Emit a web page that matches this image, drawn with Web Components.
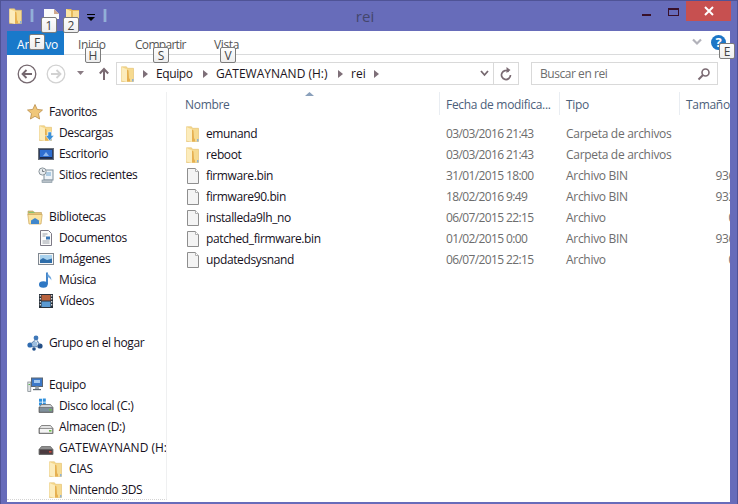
<!DOCTYPE html>
<html lang="es">
<head>
<meta charset="utf-8">
<title>rei</title>
<style>
  html, body { margin: 0; padding: 0; background: #676cba; }
  body { font: 12px "Open Sans", "Noto Sans", sans-serif; }
</style>
</head>
<body>
<win-window>
  <win-titlebar slot="top" caption="rei"></win-titlebar>
  <win-ribbon slot="top"></win-ribbon>
  <win-navbar slot="top"></win-navbar>

  <win-tree slot="left">
    <win-tree-item level="0" icon="star">Favoritos</win-tree-item>
    <win-tree-item level="1" icon="downloads">Descargas</win-tree-item>
    <win-tree-item level="1" icon="desktop">Escritorio</win-tree-item>
    <win-tree-item level="1" icon="recent">Sitios recientes</win-tree-item>
    <win-tree-item></win-tree-item>
    <win-tree-item level="0" icon="libraries">Bibliotecas</win-tree-item>
    <win-tree-item level="1" icon="docs">Documentos</win-tree-item>
    <win-tree-item level="1" icon="pictures">Imágenes</win-tree-item>
    <win-tree-item level="1" icon="music">Música</win-tree-item>
    <win-tree-item level="1" icon="videos">Vídeos</win-tree-item>
    <win-tree-item></win-tree-item>
    <win-tree-item level="0" icon="homegroup">Grupo en el hogar</win-tree-item>
    <win-tree-item></win-tree-item>
    <win-tree-item level="0" icon="computer">Equipo</win-tree-item>
    <win-tree-item level="1" icon="driveC">Disco local (C:)</win-tree-item>
    <win-tree-item level="1" icon="driveD">Almacen (D:)</win-tree-item>
    <win-tree-item level="1" icon="driveH" style="letter-spacing: 0">GATEWAYNAND (H:)</win-tree-item>
    <win-tree-item level="2" icon="folder">CIAS</win-tree-item>
    <win-tree-item level="2" icon="folder">Nintendo 3DS</win-tree-item>
  </win-tree>

  <win-files slot="main">
    <win-file-row icon="folder" name="emunand" date="03/03/2016 21:43" kind="Carpeta de archivos"></win-file-row>
    <win-file-row icon="folder" name="reboot" date="03/03/2016 21:43" kind="Carpeta de archivos"></win-file-row>
    <win-file-row icon="file" name="firmware.bin" date="31/01/2015 18:00" kind="Archivo BIN" size="936 KB"></win-file-row>
    <win-file-row icon="file" name="firmware90.bin" date="18/02/2016 9:49" kind="Archivo BIN" size="932 KB"></win-file-row>
    <win-file-row icon="file" name="installeda9lh_no" date="06/07/2015 22:15" kind="Archivo" size="0 KB"></win-file-row>
    <win-file-row icon="file" name="patched_firmware.bin" date="01/02/2015 0:00" kind="Archivo BIN" size="936 KB"></win-file-row>
    <win-file-row icon="file" name="updatedsysnand" date="06/07/2015 22:15" kind="Archivo" size="0 KB"></win-file-row>
  </win-files>

  <win-keytip x="41" y="17">1</win-keytip>
  <win-keytip x="63" y="17">2</win-keytip>
  <win-keytip x="29" y="34">F</win-keytip>
  <win-keytip x="85" y="47">H</win-keytip>
  <win-keytip x="153" y="47">S</win-keytip>
  <win-keytip x="220" y="47">V</win-keytip>
  <win-keytip x="719" y="43">E</win-keytip>
</win-window>

<script>
const FOLDER = `
  <path d="M1.500 .8h5l1 1.500h6v13.200H1.500z" fill="#f6da90" stroke="#e2bd6a" stroke-width=".6"/>
  <path d="M1.500 1 7 3.500V16L1.500 14.500z" fill="#fcecbc"/>
  <path d="M7 3.500 8.500 4.500 9 12 10 13.500v2H7z" fill="#e6b050"/>
  <path d="M12 13h1.500v2.500H12z" fill="#8db2d6"/>`;

const DRIVE = (top, body, led) => `
  <path d="M1 9.500 3.500 6.500h9l2.500 3v5H1z" fill="${top}" stroke="#6b6b6b" stroke-width=".8"/>
  <rect x="1.500" y="9.500" width="13" height="4.600" fill="${body}" stroke="#5a5a5a" stroke-width=".6"/>
  <rect x="11" y="11" width="2.500" height="1.600" fill="${led}"/>`;

const ICONS = {
  folder: FOLDER,
  file: `
    <path d="M2.500 .5h8l3 3v12h-11z" fill="#f4f4f4" stroke="#8e8e8e"/>
    <path d="M10.500 .5v3h3" fill="#fff" stroke="#b0b0b0"/>`,
  star: `
    <path d="M8 .5l2.200 4.900 5.300.6-4 3.600 1.100 5.400L8 12.300l-4.600 2.700 1.100-5.400-4-3.600 5.300-.6z" fill="#f0c77a" stroke="#b98d4a" stroke-width=".8"/>`,
  downloads: FOLDER + `
    <path d="M10 7h3.500v3.500H16L11.700 15.800 7.500 10.500H10z" fill="#3a8fd8" stroke="#fff" stroke-width=".5"/>`,
  desktop: `
    <rect x=".5" y="2.500" width="15" height="11" fill="#2e3f63" stroke="#6a7078"/>
    <rect x="2" y="4" width="12" height="7" fill="#2f6fd0"/>
    <path d="M5 10l3-4 3 4z" fill="#8fb8ee"/>
    <rect x="2" y="11" width="12" height="1.400" fill="#1b2a49"/>`,
  recent: `
    <rect x="6" y="3" width="9" height="10" fill="#eef3f7" stroke="#7f8f9c"/>
    <path d="M8 6h5M8 8h5" stroke="#6fa4cf"/>
    <rect x="4" y="13" width="10" height="2.500" fill="#b9c2c9" stroke="#7f8f9c" stroke-width=".6"/>
    <circle cx="4.500" cy="4.500" r="3.600" fill="#e8ecef" stroke="#8a949b"/>
    <path d="M4.500 2.500v2h2" fill="none" stroke="#59636a" stroke-width=".8"/>`,
  libraries: `
    <path d="M1 2h5l1 1.500h7.500V6H1z" fill="#e3c377" stroke="#b9985a" stroke-width=".6"/>
    <rect x="1.500" y="2.800" width="6" height="1.100" fill="#7cc36f"/>
    <path d="M.8 5.500h14.400l-1.200 9.500H2z" fill="#fbe3a0" stroke="#cba85e" stroke-width=".7"/>
    <path d="M4 15v-3.500l4-2.500 4 2.500V15z" fill="#3f86cc"/>`,
  docs: `
    <path d="M2.500 .5h8l3 3v12h-11z" fill="#fbfbfb" stroke="#7d7a86"/>
    <path d="M4.500 4h5M4.500 6h3M4.500 11h7M4.500 13h7" stroke="#9aa0a8"/>
    <rect x="8" y="6.500" width="4" height="3" fill="#3b78b8"/>`,
  pictures: `
    <rect x=".5" y="2.500" width="15" height="11" fill="#f5f5f5" stroke="#7f8790"/>
    <rect x="2" y="4" width="12" height="8" fill="#a9d2ee"/>
    <path d="M2 12V9l3-2 4 2 5-1.500V12z" fill="#2f6eaa"/>`,
  music: `
    <path d="M9 .5v12" stroke="#2f78c4" stroke-width="1.800"/>
    <path d="M9.500 .5c.5 3 4.500 3.500 3.800 8C12.800 6.500 11 5.500 9.500 5z" fill="#6fa7de"/>
    <ellipse cx="5.300" cy="12.500" rx="4.300" ry="3.200" fill="#2f78c4"/>`,
  videos: `
    <rect x="1" y="1" width="14" height="14" fill="#28303a"/>
    <rect x="3.500" y="2" width="9" height="5.500" fill="#b8623e"/>
    <rect x="3.500" y="8.500" width="9" height="5.500" fill="#5b9ad2"/>
    <path d="M1.800 2h1v1.500h-1zM1.800 5h1v1.500h-1zM1.800 8h1v1.500h-1zM1.800 11h1v1.500h-1zM13.200 2h1v1.500h-1zM13.200 5h1v1.500h-1zM13.200 8h1v1.500h-1zM13.200 11h1v1.500h-1z" fill="#fff"/>`,
  homegroup: `
    <circle cx="9" cy="3" r="2.400" fill="#3f78b8"/>
    <circle cx="3" cy="10" r="2.600" fill="#2f6bb0"/>
    <circle cx="13" cy="11" r="2.600" fill="#254f86"/>
    <path d="M8 5.500 4.500 8.500M10 5.500l2.500 4M5 11.500h6" stroke="#6e8fb5" stroke-width="1.400"/>
    <circle cx="8" cy="9" r="2.400" fill="#9dbfe0"/>
    <circle cx="7" cy="14" r="1.800" fill="#1f4f8a"/>`,
  computer: `
    <rect x=".8" y="5" width="3" height="9.500" fill="#dfe3e6" stroke="#7a8288" stroke-width=".7"/>
    <rect x="1.500" y="7" width="1.600" height="1" fill="#59b34f"/>
    <rect x="4.500" y="1" width="11" height="8.500" fill="#3c78c8" stroke="#5c6670"/>
    <path d="M7 3h6v3H7z" fill="#a5c9ef"/>
    <path d="M8.500 9.500h3l.7 2.500H7.800z" fill="#9aa3aa"/>
    <rect x="6" y="12" width="8" height="1.200" fill="#5c6670"/>`,
  driveC: `
    <path d="M1 .8h3v3H1zM4.800 .4h3v3.400h-3zM1 4.600h3v3H1zM4.800 4.600h3V8h-3z" fill="#2f8fdc"/>` +
    DRIVE("#cfd3d6", "#7f8f9c", "#6cc04a"),
  driveD: DRIVE("#e3e3e3", "#f4f4f4", "#6cc04a"),
  driveH: DRIVE("#8f8f8f", "#4b3a3f", "#c8483a")
};

const icon = (name) => `<svg width="16" height="16" viewBox="0 0 16 16" aria-hidden="true">${ICONS[name] || ""}</svg>`;

// everything below the title bar sits inside the white client area
class WinWindow extends HTMLElement {
  constructor() {
    super();
    this.attachShadow({ mode: "open" });
    this.shadowRoot.innerHTML = `
      <style>
        :host {
          display: flex;
          flex-direction: column;
          position: relative;
          box-sizing: border-box;
          width: 738px;
          height: 504px;
          overflow: hidden;
          background: #676cba;
          border: 1px solid #4f5396;
          border-bottom: 0;
        }
        .client {
          flex: 1;
          min-height: 0;
          display: flex;
          flex-direction: column;
          margin: 0 7px 2px 6px;
          background: #fff;
        }
        .panes {
          flex: 1;
          min-height: 0;
          display: flex;
        }
      </style>
      <slot name="title"></slot>
      <div class="client">
        <slot name="top"></slot>
        <div class="panes">
          <slot name="left"></slot>
          <slot name="main"></slot>
        </div>
      </div>
      <slot></slot>
    `;
  }

  connectedCallback() {
    const bar = this.querySelector("win-titlebar");
    if (bar) bar.slot = "title";
  }
}

class WinTitlebar extends HTMLElement {
  constructor() {
    super();
    this.attachShadow({ mode: "open" });
  }

  connectedCallback() {
    this.shadowRoot.innerHTML = `
      <style>
        :host {
          display: grid;
          grid-template-columns: minmax(0, 1fr) auto minmax(0, 1fr);
          height: 30px;
        }
        .quick { display: flex; align-items: flex-start; padding: 7px 0 0 7px; }
        .sep { width: 2px; height: 13px; margin: 1px 0 0 6px; background: #8fb0d8; border: 1px solid #7f84c4; border-width: 0 1px; }
        .quick svg.q { margin-left: 10px; }
        .quick svg.q2 { margin-left: 5px; }
        .drop { width: 8px; margin: 6px 0 0 6px; }
        .drop i { display: block; height: 1px; background: #000; margin-bottom: 2px; }
        .drop b { display: block; width: 0; border: 4px solid transparent; border-top: 4px solid #000; border-bottom: 0; }
        .sep.last { margin-left: 8px; }
        .caption { font-size: 15px; color: #44466c; padding: 5px 8px 0 0; }
        .controls { display: flex; justify-content: flex-end; align-items: flex-start; padding-right: 6px; }
        .btn { width: 26px; height: 20px; margin-left: 1px; display: flex; align-items: center; justify-content: center; }
        .min i { display: block; width: 9px; height: 2px; background: #38102a; margin-top: 8px; }
        .max i { display: block; box-sizing: border-box; width: 11px; height: 8px; border: 1px solid #38102a; border-top-width: 2px; margin-top: 2px; }
        .close { width: 45px; margin-left: 0; background: #c75050; }
      </style>
      <div class="quick">
        ${icon("folder")}
        <span class="sep"></span>
        <svg class="q" width="16" height="16" viewBox="0 0 16 16"><path d="M0 1h10l5 5v5H0z" fill="#fbfbfb"/><path d="M10 1v5h5z" fill="#cfa88e"/></svg>
        <svg class="q2" width="16" height="16" viewBox="0 0 16 16"><path d="M1 1h5l1 1h7v10H1z" fill="#e6b95a"/><path d="M1 1l5 2v10H1z" fill="#fbe6a6"/><path d="M8 3h6v9H8z" fill="#f8dc95"/></svg>
        <span class="drop"><i></i><b></b></span>
        <span class="sep last"></span>
      </div>
      <div class="caption">${this.getAttribute("caption")}</div>
      <div class="controls">
        <span class="btn min"><i></i></span>
        <span class="btn max"><i></i></span>
        <span class="btn close">
          <svg width="10" height="10" viewBox="0 0 10 10"><path d="M1 1l8 8M9 1l-8 8" stroke="#fff" stroke-width="2"/></svg>
        </span>
      </div>
    `;
  }
}

class WinRibbon extends HTMLElement {
  constructor() {
    super();
    this.attachShadow({ mode: "open" });
    this.shadowRoot.innerHTML = `
      <style>
        :host {
          display: flex;
          align-items: stretch;
          height: 24px;
          box-sizing: border-box;
          border-bottom: 1px solid #dadbdc;
          color: #555;
          letter-spacing: -.35px;
        }
        .tab { display: flex; align-items: center; padding: 3px 0 0 14px; box-sizing: border-box; }
        .file { width: 57px; padding-left: 10px; background: #1979ca; color: #fff; margin-bottom: -1px; letter-spacing: -.1px; }
        .home { width: 57px; }
        .share { width: 79px; letter-spacing: -.7px; }
        .view { width: 60px; }
        .right { margin-left: auto; display: flex; align-items: center; padding: 0 4px 1px 0; }
        .help {
          width: 15px; height: 15px; margin-left: 9px; border-radius: 50%;
          background: #1c76c6; color: #fff; font: bold 13px/15px "Open Sans", sans-serif; text-align: center;
        }
      </style>
      <div class="tab file">Archivo</div>
      <div class="tab home">Inicio</div>
      <div class="tab share">Compartir</div>
      <div class="tab view">Vista</div>
      <div class="right">
        <svg width="10" height="8" viewBox="0 0 10 8"><path d="M1 1.500l4 4 4-4" fill="none" stroke="#b2b2ba" stroke-width="2.200"/></svg>
        <div class="help">?</div>
      </div>
    `;
  }
}

class WinNavbar extends HTMLElement {
  constructor() {
    super();
    this.attachShadow({ mode: "open" });
    const arrow = (cls) => `<svg class="crumb ${cls}" width="5" height="8" viewBox="0 0 5 8"><path d="M0 0l5 4-5 4z" fill="#7e6f78"/></svg>`;
    this.shadowRoot.innerHTML = `
      <style>
        :host {
          display: flex;
          align-items: center;
          height: 37px;
          box-sizing: border-box;
          padding: 0 0 0 10px;
          color: #1c1420;
        }
        .nav { display: flex; align-items: center; width: 99px; flex: none; }
        .nav svg { flex: none; }
        .nav .fwd { margin-left: 9px; }
        .nav .drop { margin: -2px 0 0 11px; }
        .nav .up { margin-left: 15px; }
        .addr {
          flex: none;
          width: 403px;
          height: 23px;
          box-sizing: border-box;
          display: flex;
          align-items: center;
          border: 1px solid #d9d9d9;
          padding-left: 3px;
        }
        .crumb { flex: none; }
        .addr span { white-space: nowrap; }
        .a1 { margin-left: 7px; }
        .t1 { margin-left: 8px; width: 47px; letter-spacing: -.4px; }
        .t2 { margin-left: 8px; width: 122px; }
        .t3 { margin-left: 8px; width: 23px; }
        .chev { margin-left: auto; margin-right: 4px; }
        .refresh {
          width: 24px; height: 21px; border-left: 1px solid #d9d9d9;
          display: flex; align-items: center; justify-content: center;
        }
        .search {
          flex: none;
          margin-left: 12px;
          width: 187px;
          height: 23px;
          box-sizing: border-box;
          display: flex;
          align-items: center;
          justify-content: space-between;
          border: 1px solid #d9d9d9;
          padding: 0 6px 0 8px;
          color: #6d6d6d;
          letter-spacing: -.45px;
        }
      </style>
      <div class="nav">
        <svg width="20" height="20" viewBox="0 0 20 20"><circle cx="10" cy="10" r="8.800" fill="#fff" stroke="#75686f" stroke-width="1.300"/><path d="M15 10H6M9.500 6 5.500 10l4 4" fill="none" stroke="#75686f" stroke-width="1.800"/></svg>
        <svg class="fwd" width="20" height="20" viewBox="0 0 20 20"><circle cx="10" cy="10" r="8.800" fill="#fff" stroke="#d2d2d2" stroke-width="1.300"/><path d="M5 10h9M10.500 6l4 4-4 4" fill="none" stroke="#d2d2d2" stroke-width="1.800"/></svg>
        <svg class="drop" width="7" height="4" viewBox="0 0 7 4"><path d="M0 0h7L3.500 4z" fill="#8a7c84"/></svg>
        <svg class="up" width="10" height="13" viewBox="0 0 10 13"><path d="M5 13V2M.8 6.500 5 2l4.200 4.500" fill="none" stroke="#7a6a72" stroke-width="2"/></svg>
      </div>
      <div class="addr">
        ${icon("folder")}
        ${arrow("a1")}
        <span class="t1">Equipo</span>
        ${arrow("a2")}
        <span class="t2">GATEWAYNAND (H:)</span>
        ${arrow("a3")}
        <span class="t3">rei</span>
        ${arrow("a4")}
        <svg class="chev" width="9" height="7" viewBox="0 0 9 7"><path d="M1 1l3.500 4L8 1" fill="none" stroke="#75686f" stroke-width="1.800"/></svg>
        <div class="refresh">
          <svg width="12" height="14" viewBox="0 0 12 14"><path d="M8.800 4.500A4.500 4.500 0 1 0 10.500 8" fill="none" stroke="#7a6a72" stroke-width="1.700"/><path d="M6.500 0v6l4-3z" fill="#7a6a72"/></svg>
        </div>
      </div>
      <div class="search">
        <span>Buscar en rei</span>
        <svg width="14" height="14" viewBox="0 0 14 14"><circle cx="8.500" cy="5.500" r="3.500" fill="none" stroke="#7a6a72" stroke-width="1.600"/><path d="M6 8l-4.500 4.500" stroke="#7a6a72" stroke-width="2"/></svg>
      </div>
    `;
  }
}

class WinTree extends HTMLElement {
  constructor() {
    super();
    this.attachShadow({ mode: "open" });
    this.shadowRoot.innerHTML = `
      <style>
        :host {
          flex: none;
          display: block;
          width: 160px;
          box-sizing: border-box;
          height: 408px;
          padding-top: 9px;
          overflow: hidden;
          border-right: 1px solid #eff0f1;
          border-bottom: 1px dotted #d4d4d4;
          color: #15101c;
          letter-spacing: -.36px;
        }
      </style>
      <slot></slot>
    `;
  }
}

class WinTreeItem extends HTMLElement {
  constructor() {
    super();
    this.attachShadow({ mode: "open" });
  }

  connectedCallback() {
    const level = Number(this.getAttribute("level") || 0);
    const name = this.getAttribute("icon");
    const pad = [20, 31, 41][level];
    this.shadowRoot.innerHTML = `
      <style>
        :host {
          display: flex;
          align-items: center;
          height: 21px;
          white-space: nowrap;
          padding-left: ${pad}px;
        }
        .ic { flex: none; width: ${level === 0 ? 22 : 21}px; height: 16px; }
      </style>
      ${name ? `<span class="ic">${icon(name)}</span><slot></slot>` : ""}
    `;
  }
}

class WinFiles extends HTMLElement {
  constructor() {
    super();
    this.attachShadow({ mode: "open" });
    this.shadowRoot.innerHTML = `
      <style>
        :host {
          flex: 1;
          min-width: 0;
          display: block;
          overflow: hidden;
        }
        .head {
          display: grid;
          grid-template-columns: 273px 120px 120px 80px;
          height: 23px;
          color: #4c607a;
          margin-bottom: 8px;
          letter-spacing: -.3px;
        }
        .head div {
          position: relative;
          box-sizing: border-box;
          padding: 4px 0 0 6px;
          border-right: 1px solid #e9edf2;
          white-space: nowrap;
          overflow: hidden;
        }
        .head .name { padding-left: 18px; overflow: visible; }
        .sort { position: absolute; left: 138px; top: 0; }
      </style>
      <div class="head">
        <div class="name">Nombre
          <svg class="sort" width="9" height="5" viewBox="0 0 9 5"><path d="M0 4 4.500 0 9 4z" fill="#8aa0bb"/></svg>
        </div>
        <div>Fecha de modifica...</div>
        <div>Tipo</div>
        <div>Tamaño</div>
      </div>
      <slot></slot>
    `;
  }
}

class WinFileRow extends HTMLElement {
  constructor() {
    super();
    this.attachShadow({ mode: "open" });
  }

  connectedCallback() {
    const attr = (n) => this.getAttribute(n) || "";
    this.shadowRoot.innerHTML = `
      <style>
        :host {
          display: grid;
          grid-template-columns: 273px 120px 120px 72px;
          align-items: center;
          height: 21px;
          white-space: nowrap;
          color: #6d6d6d;
        }
        .name { display: flex; align-items: center; gap: 5px; padding-left: 18px; color: #15101c; letter-spacing: -.38px; }
        .ic { flex: none; width: 16px; height: 16px; }
        .date { padding-left: 6px; letter-spacing: -.62px; }
        .kind { padding-left: 6px; letter-spacing: -.3px; }
        .size { text-align: right; letter-spacing: -.4px; }
      </style>
      <div class="name"><span class="ic">${icon(attr("icon"))}</span>${attr("name")}</div>
      <div class="date">${attr("date")}</div>
      <div class="kind">${attr("kind")}</div>
      <div class="size">${attr("size")}</div>
    `;
  }
}

// access-key hints float over the ribbon, so these are placed by coordinates
class WinKeytip extends HTMLElement {
  constructor() {
    super();
    this.attachShadow({ mode: "open" });
    this.shadowRoot.innerHTML = `
      <style>
        :host {
          position: absolute;
          box-sizing: border-box;
          width: 16px;
          height: 16px;
          display: flex;
          align-items: center;
          justify-content: center;
          background: linear-gradient(#fdfdfd, #eeeeee);
          border: 1px solid #7c7c7c;
          border-radius: 2px;
          color: #444;
          font-size: 12px;
        }
      </style>
      <slot></slot>
    `;
  }

  connectedCallback() {
    // host has a 1px border on the window, offsets are page coordinates
    this.style.left = Number(this.getAttribute("x")) - 1 + "px";
    this.style.top = Number(this.getAttribute("y")) - 1 + "px";
  }
}

customElements.define("win-window", WinWindow);
customElements.define("win-titlebar", WinTitlebar);
customElements.define("win-ribbon", WinRibbon);
customElements.define("win-navbar", WinNavbar);
customElements.define("win-tree", WinTree);
customElements.define("win-tree-item", WinTreeItem);
customElements.define("win-files", WinFiles);
customElements.define("win-file-row", WinFileRow);
customElements.define("win-keytip", WinKeytip);
</script>
</body>
</html>
